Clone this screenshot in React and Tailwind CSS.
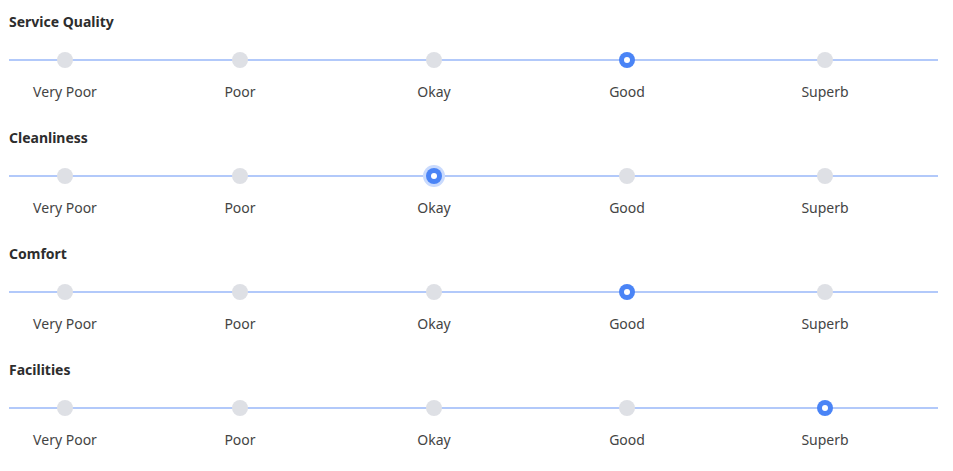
import React from "react";

const labels = ["Very Poor", "Poor", "Okay", "Good", "Superb"];
const margins = ["ml-[6px]", "ml-[75px]", "ml-[94px]", "ml-[93px]", "ml-[98px]"];

const groups = [
  { title: "Service Quality", value: 3, focus: false },
  { title: "Cleanliness", value: 2, focus: true },
  { title: "Comfort", value: 3, focus: false },
  { title: "Facilities", value: 4, focus: false },
];

function Dot({ selected, focus }) {
  if (selected) {
    return (
      <div
        className={
          "flex h-4 w-4 items-center justify-center rounded-full bg-[#4a84f6] " +
          (focus ? "ring-[3px] ring-[#c9dafd]" : "")
        }
      >
        <div className="h-[6px] w-[6px] rounded-full bg-white" />
      </div>
    );
  }
  return <div className="h-4 w-4 rounded-full bg-[#dee0e5]" />;
}

export default function App() {
  return (
    <div
      className="w-[953px] bg-white pl-[9px] pr-[15px] pt-3 text-[#333]"
      style={{ fontFamily: '"Noto Sans", "Open Sans", sans-serif' }}
    >
      {groups.map((g, gi) => (
        <div key={g.title} className={gi > 0 ? "mt-[26px]" : ""}>
          <div className="text-[14px] font-bold leading-5 text-[#2d2d2d]">{g.title}</div>
          <div className="relative mt-5">
            <div className="absolute left-0 right-0 top-[7px] h-[2px] bg-[#b2c9fa]" />
            <div className="relative flex">
              {labels.map((l, i) => (
                <div key={l} className={"flex w-[100px] flex-col items-center " + margins[i]}>
                  <Dot selected={g.value === i} focus={g.focus && g.value === i} />
                  <div className="mt-[14px] text-[14px] leading-5 text-[#444]">{l}</div>
                </div>
              ))}
            </div>
          </div>
        </div>
      ))}
      <div className="h-[18px]" />
    </div>
  );
}
